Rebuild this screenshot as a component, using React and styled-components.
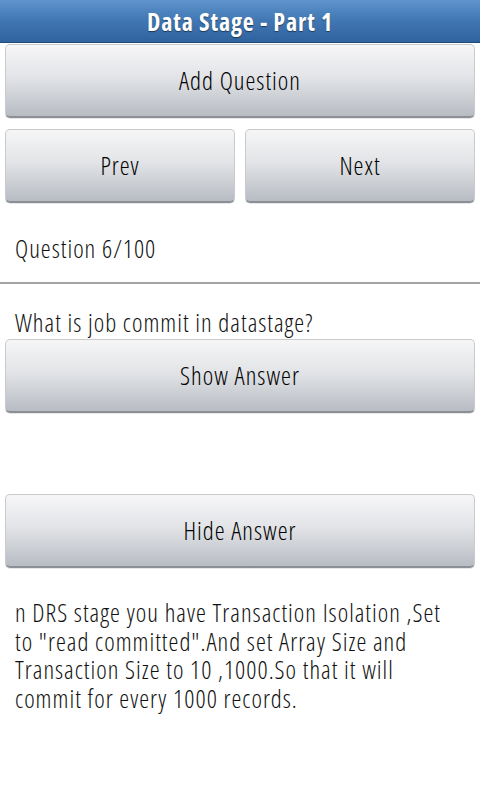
import React from 'react';
import styled, { createGlobalStyle } from 'styled-components';

const GlobalStyle = createGlobalStyle`
  html, body {
    margin: 0;
    padding: 0;
    background: #ffffff;
  }
  body {
    font-family: "Open Sans", "DejaVu Sans", sans-serif;
    font-stretch: 75%;
    width: 480px;
    height: 800px;
    overflow: hidden;
  }
`;

const Screen = styled.div`
  width: 480px;
  height: 800px;
  background: #ffffff;
  display: flex;
  flex-direction: column;
`;

const TitleBar = styled.header`
  height: 42px;
  background: linear-gradient(to bottom, #5f95cc 0%, #4076b2 50%, #2f639e 100%);
  border-bottom: 1px solid #1f4a7a;
  display: flex;
  align-items: center;
  justify-content: center;
  h1 {
    margin: 0 0 -1px;
    color: #ffffff;
    font-size: 24px;
    font-weight: 700;
    font-stretch: 75%;
    letter-spacing: 0.9px;
    text-shadow: 0 1px 1px rgba(0, 0, 0, 0.5);
  }
`;

const Body = styled.div`
  display: flex;
  flex-direction: column;
  padding: 1px 5px 0;
`;

const ButtonRow = styled.div`
  display: flex;
  gap: 10px;
  margin-top: ${p => p.$top || 0}px;
`;

const GrayButton = styled.button`
  flex: 1;
  height: 74px;
  border: 1px solid #c8cacd;
  border-bottom: 2px solid #8c8f94;
  border-radius: 5px;
  background: linear-gradient(to bottom, #f6f6f7 0%, #e2e4e7 45%, #b8bcc3 100%);
  box-shadow: 0 1px 0 #e6e7e8;
  font-family: "Open Sans", "DejaVu Sans", sans-serif;
  font-stretch: 75%;
  font-weight: 300;
  letter-spacing: 1px;
  font-size: 25px;
  color: #000000;
  padding: 0 0 2px;
  cursor: pointer;
`;

const Label = styled.div`
  font-size: 25px;
  font-weight: 300;
  letter-spacing: 1px;
  color: #111111;
  padding: 0 10px;
  margin-top: ${p => p.$top || 0}px;
  line-height: 28px;
`;

const Divider = styled.hr`
  margin: 20px -5px 0;
  border: none;
  height: 2px;
  background: #a3a3a3;
`;

const Answer = styled.p`
  margin: 30px 0 0;
  padding: 0 20px 0 10px;
  font-size: 25px;
  font-weight: 300;
  letter-spacing: 1px;
  line-height: 28.5px;
  color: #111111;
`;

const App = () => {
  return (
    <>
      <GlobalStyle />
      <Screen>
        <TitleBar>
          <h1>Data Stage - Part 1</h1>
        </TitleBar>
        <Body>
          <ButtonRow>
            <GrayButton>Add Question</GrayButton>
          </ButtonRow>
          <ButtonRow $top={11}>
            <GrayButton>Prev</GrayButton>
            <GrayButton>Next</GrayButton>
          </ButtonRow>
          <Label $top={31}>Question 6/100</Label>
          <Divider />
          <Label $top={24}>What is job commit in datastage?</Label>
          <ButtonRow $top={3}>
            <GrayButton>Show Answer</GrayButton>
          </ButtonRow>
          <ButtonRow $top={81}>
            <GrayButton>Hide Answer</GrayButton>
          </ButtonRow>
          <Answer>
            n DRS stage you have Transaction Isolation ,Set to "read committed".And set Array Size and Transaction Size to 10 ,1000.So that it will commit for every 1000 records.
          </Answer>
        </Body>
      </Screen>
    </>
  );
};

export default App;
